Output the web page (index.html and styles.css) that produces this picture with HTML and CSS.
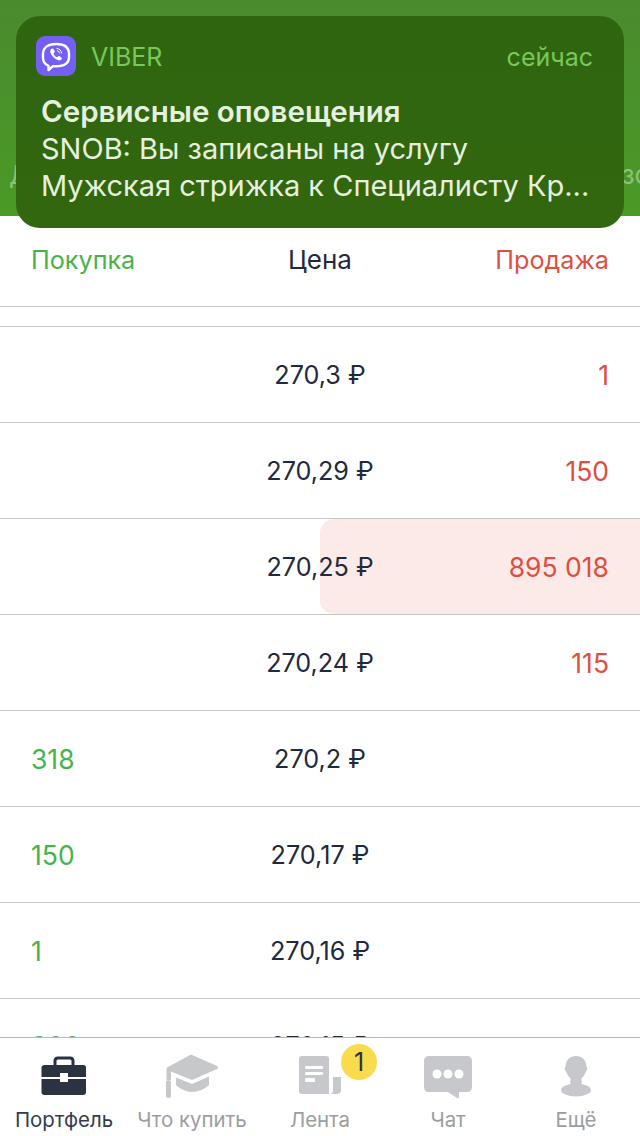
FILE: index.html
```html
<!DOCTYPE html>
<html lang="ru">
<head>
    <meta charset="UTF-8">
    <meta name="viewport" content="width=device-width, initial-scale=1.0">
    <title>Стакан</title>
    <link rel="stylesheet" href="styles.css">
</head>
<body>
    <div class="screen">
        <header class="top">
            <div class="top-tabs">
                <span>Детали</span>
                <span class="top-tab-right">Обзор</span>
            </div>
        </header>

        <div class="notice">
            <div class="notice-head">
                <svg class="viber" viewBox="0 0 40 40">
                    <rect width="40" height="40" rx="9" fill="#7360f2"/>
                    <path d="M20 8c-7.500 0-13 3-13 10v3.500c0 4.500 2 7 5.500 8.300V34l4.500-3.800H20c8 0 13-3 13-9.200V18c0-7-5.500-10-13-10z" fill="none" stroke="#fff" stroke-width="2.400" stroke-linejoin="round"/>
                    <path d="M15.300 12.800c.9-.6 1.600-.4 2.100.3l1.200 1.700c.4.700.3 1.200-.3 1.700l-.8.700c.4 1.700 1.900 3.400 3.700 4.100l.8-.9c.5-.5 1.100-.6 1.700-.2l1.600 1.200c.7.500.8 1.200.2 1.900-.8 1-1.900 1.400-3.100 1-4.100-1.500-6.700-4.200-8-7.900-.4-1.500.2-2.700 .9-3.600z" fill="#fff"/>
                    <path d="M21 12.500c2.500.2 4.300 2 4.500 4.500M21.300 14.800c1.200.1 2 1 2.100 2.200" fill="none" stroke="#fff" stroke-width="1" stroke-linecap="round"/>
                </svg>
                <span class="notice-app">VIBER</span>
                <span class="notice-time">сейчас</span>
            </div>
            <div class="notice-title">Сервисные оповещения</div>
            <div class="notice-text">SNOB: Вы записаны на услугу</div>
            <div class="notice-text">Мужская стрижка к Специалисту Кр...</div>
        </div>

        <div class="head-row">
            <span class="cell buy">Покупка</span>
            <span class="cell price">Цена</span>
            <span class="cell sell">Продажа</span>
        </div>

        <div class="book">
            <div class="gap-row"></div>
            <div class="row">
                <span class="cell buy"></span>
                <span class="cell price">270,3 ₽</span>
                <span class="cell sell">1</span>
            </div>
            <div class="row">
                <span class="cell buy"></span>
                <span class="cell price">270,29 ₽</span>
                <span class="cell sell">150</span>
            </div>
            <div class="row">
                <div class="depth"></div>
                <span class="cell buy"></span>
                <span class="cell price">270,25 ₽</span>
                <span class="cell sell">895 018</span>
            </div>
            <div class="row">
                <span class="cell buy"></span>
                <span class="cell price">270,24 ₽</span>
                <span class="cell sell">115</span>
            </div>
            <div class="row">
                <span class="cell buy">318</span>
                <span class="cell price">270,2 ₽</span>
                <span class="cell sell"></span>
            </div>
            <div class="row">
                <span class="cell buy">150</span>
                <span class="cell price">270,17 ₽</span>
                <span class="cell sell"></span>
            </div>
            <div class="row">
                <span class="cell buy">1</span>
                <span class="cell price">270,16 ₽</span>
                <span class="cell sell"></span>
            </div>
            <div class="row row-cut">
                <span class="cell buy">300</span>
                <span class="cell price">270,15 ₽</span>
                <span class="cell sell"></span>
            </div>
        </div>

        <nav class="tabbar">
            <div class="tab active">
                <svg class="tab-icon" viewBox="0 0 64 48">
                    <path d="M23 12V8c0-1.800 1.200-3 3-3h12c1.800 0 3 1.200 3 3v4" fill="none" stroke="#2b3342" stroke-width="3"/>
                    <path d="M12.500 12h39c1.500 0 2.500 1 2.500 2.500V24H36v-4h-8v4H9.500v-9.500C9.500 13 11 12 12.500 12z" fill="#2b3342"/>
                    <path d="M9.500 26H28v3h8v-3h18v13c0 2-1 3-3 3H12.500c-2 0-3-1-3-3z" fill="#2b3342"/>
                </svg>
                <span>Портфель</span>
            </div>
            <div class="tab">
                <svg class="tab-icon" viewBox="0 0 64 48">
                    <path d="M31 1.500 57 13c1.500.8 1.500 2.200 0 3L32 27 11 18.500V27H6.500V16c0-.8.300-1.300 1-1.700z" fill="#c6c8cb"/>
                    <path d="M16 24.500 32 31l17-7.500v8.500c-4 4-11 7-17 7-5.500 0-12-3-16-7z" fill="#c6c8cb"/>
                    <rect x="6" y="27" width="5" height="18" rx="2.500" fill="#c6c8cb"/>
                </svg>
                <span>Что купить</span>
            </div>
            <div class="tab">
                <svg class="tab-icon" viewBox="0 0 64 48">
                    <path d="M14 3h24c2 0 3 1.200 3 3v35H14c-2 0-3-1.200-3-3V6c0-1.800 1-3 3-3z" fill="#c6c8cb"/>
                    <rect x="17" y="13" width="18" height="3" rx="1" fill="#fff"/>
                    <rect x="17" y="19" width="18" height="3" rx="1" fill="#fff"/>
                    <rect x="17" y="25" width="10" height="4" rx="1" fill="#fff"/>
                    <path d="M45 24h8v13c0 2.500-1.500 4-4 4h-6c1.500-1 2-2 2-4z" fill="#c6c8cb"/>
                </svg>
                <span>Лента</span>
                <div class="badge">1</div>
            </div>
            <div class="tab">
                <svg class="tab-icon" viewBox="0 0 64 48">
                    <path d="M13 3h38c3 0 5 2 5 5v26c0 3-2 5-5 5h-8v5c0 1.200-1 1.500-2 1l-9-6H13c-3 0-5-2-5-5V8c0-3 2-5 5-5z" fill="#c6c8cb"/>
                    <circle cx="21" cy="21" r="4.500" fill="#fff"/>
                    <circle cx="32" cy="21" r="4.500" fill="#fff"/>
                    <circle cx="43" cy="21" r="4.500" fill="#fff"/>
                </svg>
                <span>Чат</span>
            </div>
            <div class="tab">
                <svg class="tab-icon" viewBox="0 0 64 48">
                    <path d="M32 3c6 0 10 4 10.500 10.500 1.500 1 1 4-.8 5.500-1 3-2.500 5-4.200 6.500V30h-11v-4.500c-1.700-1.500-3.200-3.500-4.200-6.500-1.800-1.500-2.300-4.500-.8-5.500C22 7 26 3 32 3z" fill="#c6c8cb"/>
                    <ellipse cx="32" cy="37" rx="15" ry="6.500" fill="#c6c8cb"/>
                    <path d="M26.500 27h11v6h-11z" fill="#c6c8cb"/>
                </svg>
                <span>Ещё</span>
            </div>
        </nav>
    </div>
</body>
</html>
```

FILE: styles.css
```css
html, body {
    margin: 0;
    padding: 0;
    background-color: #fff;
}

.screen {
    position: relative;
    display: flex;
    flex-direction: column;
    width: 640px;
    height: 1136px;
    overflow: hidden;
    font-family: Inter, "Noto Sans", sans-serif;
    color: #1f2a3c;
}

.top {
    flex: none;
    height: 216px;
    box-sizing: border-box;
    padding-top: 160px;
    background: linear-gradient(#4a8b2e, #4a9a26);
}

.top-tabs {
    display: flex;
    justify-content: space-between;
    padding-left: 9px;
    font-size: 26px;
    line-height: 30px;
    color: #8cc277;
    white-space: nowrap;
}

.top-tab-right {
    margin-right: -26px;
}

/* push notification lying over the header */
.notice {
    position: absolute;
    left: 16px;
    top: 16px;
    width: 608px;
    height: 212px;
    box-sizing: border-box;
    padding: 20px 25px 0;
    border-radius: 24px;
    background: linear-gradient(#2f650f, #32670f);
    color: #e6f0de;
    font-size: 29px;
    line-height: 37px;
}

.notice-head {
    display: flex;
    align-items: center;
    height: 40px;
    margin-left: -5px;
    margin-bottom: 17px;
    font-size: 25px;
    color: #78c85b;
}

.notice-app, .notice-time {
    margin-top: 2px;
}

.viber {
    width: 40px;
    height: 40px;
    margin-right: 15px;
}

.notice-time {
    margin-left: auto;
    margin-right: 6px;
}

.notice-title {
    font-size: 29.500px;
    font-weight: 600;
}

.notice-text {
    white-space: nowrap;
}

.head-row {
    display: flex;
    flex: none;
    align-items: center;
    height: 91px;
    box-sizing: border-box;
    padding-bottom: 3px;
    border-bottom: 1px solid #c8c8c8;
    font-size: 25.200px;
}

.head-row .buy {
    color: #45b34a;
}

.head-row .price {
    font-size: 26px;
}

.head-row .sell {
    color: #dd4f3f;
}

.book {
    flex: 1;
    min-height: 0;
    overflow: hidden;
}

.gap-row {
    height: 19px;
    border-bottom: 1px solid #c8c8c8;
}

.row {
    position: relative;
    display: flex;
    align-items: center;
    height: 95px;
    border-bottom: 1px solid #c8c8c8;
    font-size: 26.500px;
}

/* last row runs under the tab bar, only the tops of the digits show */
.row-cut {
    height: 93px;
    padding-bottom: 2px;
}

.depth {
    position: absolute;
    left: 320px;
    right: 0;
    top: 0;
    bottom: 0;
    background-color: rgba(221, 79, 63, 0.12);
    border-radius: 14px 0 0 14px;
}

.cell {
    position: relative;
    flex: 1;
    padding: 0 31px;
    white-space: nowrap;
}

.price {
    flex: none;
    width: 200px;
    padding: 0;
    font-size: 25.200px;
    text-align: center;
}

.buy {
    color: #45b34a;
}

.sell {
    color: #dd4f3f;
    text-align: right;
}

.tabbar {
    display: flex;
    flex: none;
    height: 99px;
    box-sizing: border-box;
    border-top: 1px solid #b8b8b8;
    background-color: #fff;
}

.tab {
    position: relative;
    display: flex;
    flex: 1;
    flex-direction: column;
    align-items: center;
    padding-top: 15px;
    font-size: 20.400px;
    line-height: 24px;
    color: #9a9da2;
}

.tab.active {
    color: #333c4b;
}

.tab-icon {
    width: 64px;
    height: 48px;
    margin-bottom: 7px;
}

.badge {
    position: absolute;
    left: 85px;
    top: 6px;
    width: 36px;
    height: 36px;
    border-radius: 50%;
    background-color: #fadb4e;
    color: #2b3342;
    font-size: 25px;
    line-height: 36px;
    text-align: center;
}
```
